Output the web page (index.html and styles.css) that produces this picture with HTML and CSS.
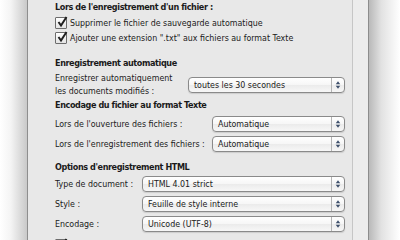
FILE: index.html
```html
<!DOCTYPE html>
<html lang="fr">
<head>
    <meta charset="UTF-8">
    <title>Préférences - Ouvrir et enregistrer</title>
    <link rel="stylesheet" href="styles.css">
</head>
<body>
    <div class="desk">
        <div class="shade-left"></div>
        <div class="panel">
            <div class="heading">Lors de l'enregistrement d'un fichier :</div>
            <label class="check first"><span class="box"><svg viewBox="0 0 12 12"><path d="M2.5 6 L5 9.5 L10.5 1" /></svg></span>Supprimer le fichier de sauvegarde automatique</label>
            <label class="check"><span class="box"><svg viewBox="0 0 12 12"><path d="M2.5 6 L5 9.5 L10.5 1" /></svg></span>Ajouter une extension ".txt" aux fichiers au format Texte</label>

            <div class="heading gap">Enregistrement automatique</div>
            <div class="row auto">
                <div class="lbl">Enregistrer automatiquement<br>les documents modifiés :</div>
                <div class="popup">toutes les 30 secondes<span class="arrows"><svg viewBox="0 0 8 12"><path d="M4 1 L7 5 L1 5 Z M4 11 L7 7 L1 7 Z" /></svg></span></div>
            </div>

            <div class="heading">Encodage du fichier au format Texte</div>
            <div class="row enc first">
                <div class="lbl">Lors de l'ouverture des fichiers :</div>
                <div class="popup">Automatique<span class="arrows"><svg viewBox="0 0 8 12"><path d="M4 1 L7 5 L1 5 Z M4 11 L7 7 L1 7 Z" /></svg></span></div>
            </div>
            <div class="row enc">
                <div class="lbl">Lors de l'enregistrement des fichiers :</div>
                <div class="popup">Automatique<span class="arrows"><svg viewBox="0 0 8 12"><path d="M4 1 L7 5 L1 5 Z M4 11 L7 7 L1 7 Z" /></svg></span></div>
            </div>

            <div class="heading gap2">Options d'enregistrement HTML</div>
            <div class="row html">
                <div class="lbl">Type de document :</div>
                <div class="popup">HTML 4.01 strict<span class="arrows"><svg viewBox="0 0 8 12"><path d="M4 1 L7 5 L1 5 Z M4 11 L7 7 L1 7 Z" /></svg></span></div>
            </div>
            <div class="row html">
                <div class="lbl">Style :</div>
                <div class="popup">Feuille de style interne<span class="arrows"><svg viewBox="0 0 8 12"><path d="M4 1 L7 5 L1 5 Z M4 11 L7 7 L1 7 Z" /></svg></span></div>
            </div>
            <div class="row html">
                <div class="lbl">Encodage :</div>
                <div class="popup">Unicode (UTF-8)<span class="arrows"><svg viewBox="0 0 8 12"><path d="M4 1 L7 5 L1 5 Z M4 11 L7 7 L1 7 Z" /></svg></span></div>
            </div>
            <label class="check last"><span class="box"><svg viewBox="0 0 12 12"><path d="M2.5 6 L5 9.5 L10.5 1" /></svg></span>Ne pas écrire les éléments Blanc</label>
        </div>
        <div class="strip"></div>
        <div class="shade-right"></div>
    </div>
</body>
</html>
```

FILE: styles.css
```css
body {
    margin: 0;
    padding: 0;
    background: #fff;
    font-family: "DejaVu Sans Condensed", "DejaVu Sans", sans-serif;
    font-size: 8.8px;
    color: #1a1a1a;
}
.desk {
    display: flex;
    width: 400px;
    height: 240px;
    overflow: hidden;
}
.shade-left {
    width: 27px;
    background: linear-gradient(to right, #ffffff 0%, #f4f4f4 40%, #c9c9c9 100%);
}
.panel {
    width: 297px;
    padding-left: 27px;
    background: #e8e8e8;
    border-left: 1px solid #8e8e8e;
    border-right: 1px solid #c6c6c6;
    white-space: nowrap;
}
.strip {
    width: 15px;
    background: #ececec;
    border-right: 1px solid #8c8c8c;
}
.shade-right {
    flex: 1;
    background: linear-gradient(to right, #b9b9b9 0%, #e2e2e2 40%, #ffffff 100%);
}
.heading {
    font-weight: bold;
    font-size: 9px;
    letter-spacing: -0.4px;
    height: 14px;
    line-height: 14px;
}
.heading.gap { margin-top: 11px; }
.heading.gap2 { margin-top: 6px; }
.check {
    display: flex;
    align-items: center;
    height: 14px;
    margin-top: 1px;
    line-height: 14px;
}
.check.first { margin-top: 2px; }
.check.last { margin-top: 4px; }
.box {
    width: 10px;
    height: 10px;
    margin-right: 3px;
    border: 1px solid #6d6d6d;
    border-radius: 1px;
    background: linear-gradient(#ffffff, #e4e4e4);
    position: relative;
}
.box svg {
    position: absolute;
    left: 0;
    top: -2px;
    width: 12px;
    height: 12px;
    fill: none;
    stroke: #202020;
    stroke-width: 2;
}
.row {
    display: flex;
    align-items: center;
}
.lbl {
    line-height: 13px;
}
.row.auto {
    height: 27px;
    margin-top: 1px;
}
.row.auto .lbl { width: 133px; }
.row.enc {
    height: 20px;
}
.row.enc.first { margin-top: 2px; }
.row.enc .lbl { width: 157px; }
.row.html {
    height: 20px;
}
.row.html .lbl { width: 87px; }
.popup {
    flex: 1;
    height: 14px;
    margin-right: 7px;
    padding-left: 5px;
    line-height: 14px;
    border: 1px solid #8a8a8a;
    border-radius: 4px;
    background: linear-gradient(#ffffff 0%, #f6f6f6 50%, #ebebeb 51%, #f7f7f7 100%);
    box-shadow: 0 1px 1px rgba(0, 0, 0, 0.12);
    display: flex;
    align-items: center;
    justify-content: space-between;
}
.arrows {
    width: 12px;
    height: 14px;
    border-left: 1px solid #b5b5b5;
    display: flex;
    align-items: center;
    justify-content: center;
}
.arrows svg {
    width: 6px;
    height: 10px;
    fill: #3e4f6b;
}
```
